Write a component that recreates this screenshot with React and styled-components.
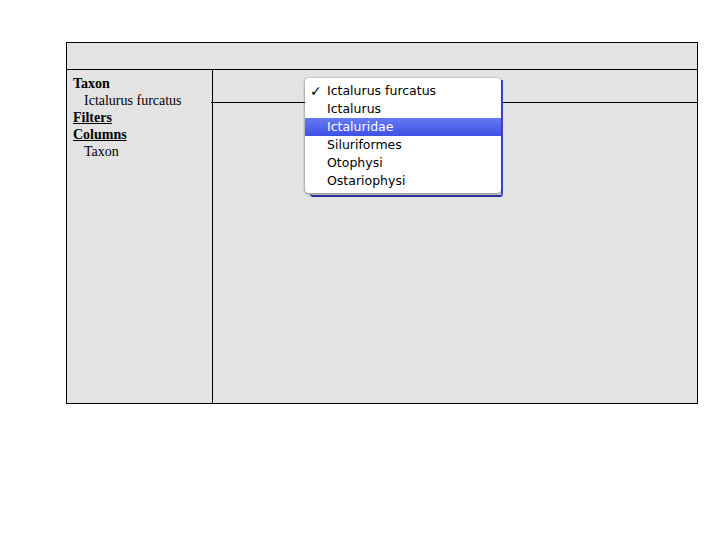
import React from 'react';
import styled, { createGlobalStyle } from 'styled-components';

const Global = createGlobalStyle`
  html, body {
    margin: 0;
    padding: 0;
    background: #ffffff;
  }
`;

const Page = styled.div`
  padding: 42px 0 0 66px;
`;

const Frame = styled.div`
  width: 630px;
  height: 360px;
  border: 1px solid #000;
  background: #e3e3e3;
  display: flex;
  flex-direction: column;
`;

const Header = styled.div`
  height: 26px;
  border-bottom: 1px solid #000;
`;

const Body = styled.div`
  flex: 1;
  display: flex;
`;

const Sidebar = styled.div`
  width: 146px;
  border-right: 1px solid #000;
  padding: 5px 0 0 6px;
  box-sizing: border-box;
  font-family: "Liberation Serif", "Times New Roman", serif;
  font-size: 14px;
  line-height: 17px;
  color: #000;
`;

const Heading = styled.div`
  font-weight: bold;
  text-decoration: ${(p) => (p.$link ? 'underline' : 'none')};
`;

const Entry = styled.div`
  padding-left: 11px;
`;

const Main = styled.div`
  flex: 1;
  position: relative;
`;

const TopRow = styled.div`
  height: 32px;
  margin-left: -2px;
  border-bottom: 1px solid #000;
`;

const Ghost = styled.div`
  position: absolute;
  left: 97px;
  top: 10px;
  width: 191px;
  height: 115px;
  border-right: 2px solid #4650cc;
  border-bottom: 2px solid #2c31a0;
  border-radius: 0 0 3px 3px;
`;

const Menu = styled.div`
  position: absolute;
  left: 92px;
  top: 8px;
  width: 196px;
  padding: 4px 0 3px;
  background: #ffffff;
  border-radius: 4px;
  box-shadow: 0 1px 3px rgba(0, 0, 0, 0.45), 0 0 0 1px rgba(0, 0, 0, 0.05);
  font-family: "DejaVu Sans", "Lucida Grande", sans-serif;
  font-size: 12.5px;
`;

const Item = styled.div`
  position: relative;
  height: 18px;
  line-height: 18px;
  padding-left: 22px;
  color: ${(p) => (p.$active ? '#fff' : '#000')};
  background: ${(p) => (p.$active ? 'linear-gradient(#6679f3, #3e51e6)' : 'transparent')};
`;

const Check = styled.span`
  position: absolute;
  left: 5px;
  top: 0;
  font-size: 14px;
  font-weight: bold;
`;

const items = [
  'Ictalurus furcatus',
  'Ictalurus',
  'Ictaluridae',
  'Siluriformes',
  'Otophysi',
  'Ostariophysi',
];

export default function App() {
  return (
    <Page>
      <Global />
      <Frame>
        <Header />
        <Body>
          <Sidebar>
            <Heading>Taxon</Heading>
            <Entry>Ictalurus furcatus</Entry>
            <Heading $link>Filters</Heading>
            <Heading $link>Columns</Heading>
            <Entry>Taxon</Entry>
          </Sidebar>
          <Main>
            <TopRow />
            <Ghost />
            <Menu>
              {items.map((t, i) => (
                <Item key={t} $active={i === 2}>
                  {i === 0 && <Check>✓</Check>}
                  {t}
                </Item>
              ))}
            </Menu>
          </Main>
        </Body>
      </Frame>
    </Page>
  );
}
